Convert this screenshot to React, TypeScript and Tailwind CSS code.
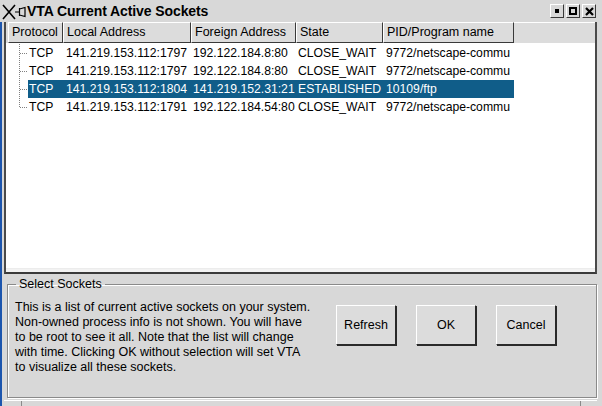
import React from "react";

const columns = [
  { label: "Protocol", width: "w-[55px]" },
  { label: "Local Address", width: "w-[128px]" },
  { label: "Foreign Address", width: "w-[105px]" },
  { label: "State", width: "w-[87px]" },
  { label: "PID/Program name", width: "w-[131px]" },
];

const rows = [
  { local: "141.219.153.112:1797", foreign: "192.122.184.8:80", state: "CLOSE_WAIT", pid: "9772/netscape-commu" },
  { local: "141.219.153.112:1797", foreign: "192.122.184.8:80", state: "CLOSE_WAIT", pid: "9772/netscape-commu" },
  { local: "141.219.153.112:1804", foreign: "141.219.152.31:21", state: "ESTABLISHED", pid: "10109/ftp", selected: true },
  { local: "141.219.153.112:1791", foreign: "192.122.184.54:80", state: "CLOSE_WAIT", pid: "9772/netscape-commu" },
];

function TreeLine({ last }: { last?: boolean }) {
  return (
    <svg width="10" height="18" className="ml-[10px] shrink-0">
      <line x1="1.5" y1="0" x2="1.5" y2={last ? 9 : 18} stroke="#808080" strokeDasharray="1 1" />
      <line x1="2" y1="9.5" x2="10" y2="9.5" stroke="#808080" strokeDasharray="1 1" />
    </svg>
  );
}

function TitleButton({ kind }: { kind: "min" | "max" | "close" }) {
  return (
    <div className="flex h-[14px] w-[14px] items-center justify-center border border-t-white border-l-white border-b-[#3a3a3a] border-r-[#3a3a3a] bg-[#d8d8d8]">
      {kind === "min" && <div className="h-[4px] w-[4px] bg-black" />}
      {kind === "max" && <div className="h-[8px] w-[8px] border-2 border-black" />}
      {kind === "close" && (
        <svg width="9" height="9" viewBox="0 0 9 9">
          <path d="M1 1L8 8M8 1L1 8" stroke="black" strokeWidth="2.2" />
        </svg>
      )}
    </div>
  );
}

function Button({ children }: { children: React.ReactNode }) {
  return (
    <button
      type="button"
      className="h-[40px] w-[60px] border border-t-white border-l-white border-b-[#2a2a2a] border-r-[#2a2a2a] bg-[#dcdcdc] text-[12.5px] text-black shadow-[1px_1px_0_#2a2a2a]"
    >
      {children}
    </button>
  );
}

export default function App() {
  return (
    <div className="flex h-[406px] w-[602px] flex-col overflow-hidden bg-[#d8d8d8] font-['Liberation_Sans',Arial,sans-serif] text-[12.5px] text-black">
      {/* title bar */}
      <div className="flex h-[22px] shrink-0 items-center">
        <svg width="27" height="21" viewBox="0 0 27 21" className="shrink-0">
          <path d="M3 4L15 18M15 4L3 18" stroke="black" strokeWidth="1.6" />
          <path d="M15 11H19M19.5 7V15M19.5 8L25 6.5V15.5L19.5 14" stroke="black" strokeWidth="1.2" fill="none" />
        </svg>
        <span className="text-[14px] font-bold tracking-[-0.1px]">VTA Current Active Sockets</span>
        <div className="ml-auto mr-[6px] flex gap-[2px]">
          <TitleButton kind="min" />
          <TitleButton kind="max" />
          <TitleButton kind="close" />
        </div>
      </div>

      <div className="flex flex-1">
        <div className="w-[2px] bg-[#1c55ad]" />
        <div className="flex flex-1 flex-col pl-[2px] pr-[5px]">
          {/* socket list */}
          <div className="flex h-[252px] flex-col border-2 border-t-0 border-[#4a4a4a] border-b-[#3a3a3a] bg-white">
            <div className="flex h-[21px] bg-[#dcdcdc] pl-[2px]">
              {columns.map((c) => (
                <div
                  key={c.label}
                  className={`${c.width} flex items-center border border-t-white border-l-white border-b-[#3a3a3a] border-r-[#3a3a3a] pl-[3px] text-[12.5px]`}
                >
                  {c.label}
                </div>
              ))}
              <div className="flex-1 border-t border-white" />
            </div>
            <div className="mt-[1px] flex flex-col pl-[2px] text-[12.2px]">
              {rows.map((r, i) => (
                <div key={i} className="flex h-[18px] items-center">
                  <TreeLine last={i === rows.length - 1} />
                  <div className={`flex h-full items-center whitespace-nowrap ${r.selected ? "bg-[#105d89] text-white" : ""}`}>
                    <span className="w-[35px] pl-[1px]">TCP</span>
                    <span className="w-[128px] pl-[3px]">{r.local}</span>
                    <span className="w-[105px] pl-[2px]">{r.foreign}</span>
                    <span className="w-[87px] pl-[2px]">{r.state}</span>
                    <span className="w-[131px] pl-[3px]">{r.pid}</span>
                  </div>
                </div>
              ))}
            </div>
            <div className="flex-1" />
            <div className="h-[4px] border-t border-[#ececec] bg-[#f2f2f2]" />
          </div>

          {/* select sockets frame */}
          <fieldset className="ml-[3px] mt-[3px] h-[121px] border border-[#8a8a8a] shadow-[1px_1px_0_#fff,inset_1px_1px_0_#fff]">
            <legend className="ml-[8px] px-[3px] text-[12.5px] leading-[14px]">Select Sockets</legend>
            <div className="flex items-start pt-[9px]">
              <p className="w-[320px] whitespace-nowrap pl-[7px] text-[12.5px] leading-[15px]">
                This is a list of current active sockets on your system.
                <br />
                Non-owned process info is not shown. You will have
                <br />
                to be root to see it all. Note that the list will change
                <br />
                with time. Clicking OK without selection will set VTA
                <br />
                to visualize all these sockets.
              </p>
              <div className="ml-[8px] mt-[5px] flex gap-[20px]">
                <Button>Refresh</Button>
                <Button>OK</Button>
                <Button>Cancel</Button>
              </div>
            </div>
          </fieldset>

          {/* bottom strip */}
          <div className="mt-[2px] flex flex-1 border-t border-white">
            <div className="w-[18px] border-r border-[#8a8a8a]" />
            <div className="flex-1" />
            <div className="w-[17px] border-l border-[#8a8a8a]" />
          </div>
        </div>
      </div>
    </div>
  );
}
